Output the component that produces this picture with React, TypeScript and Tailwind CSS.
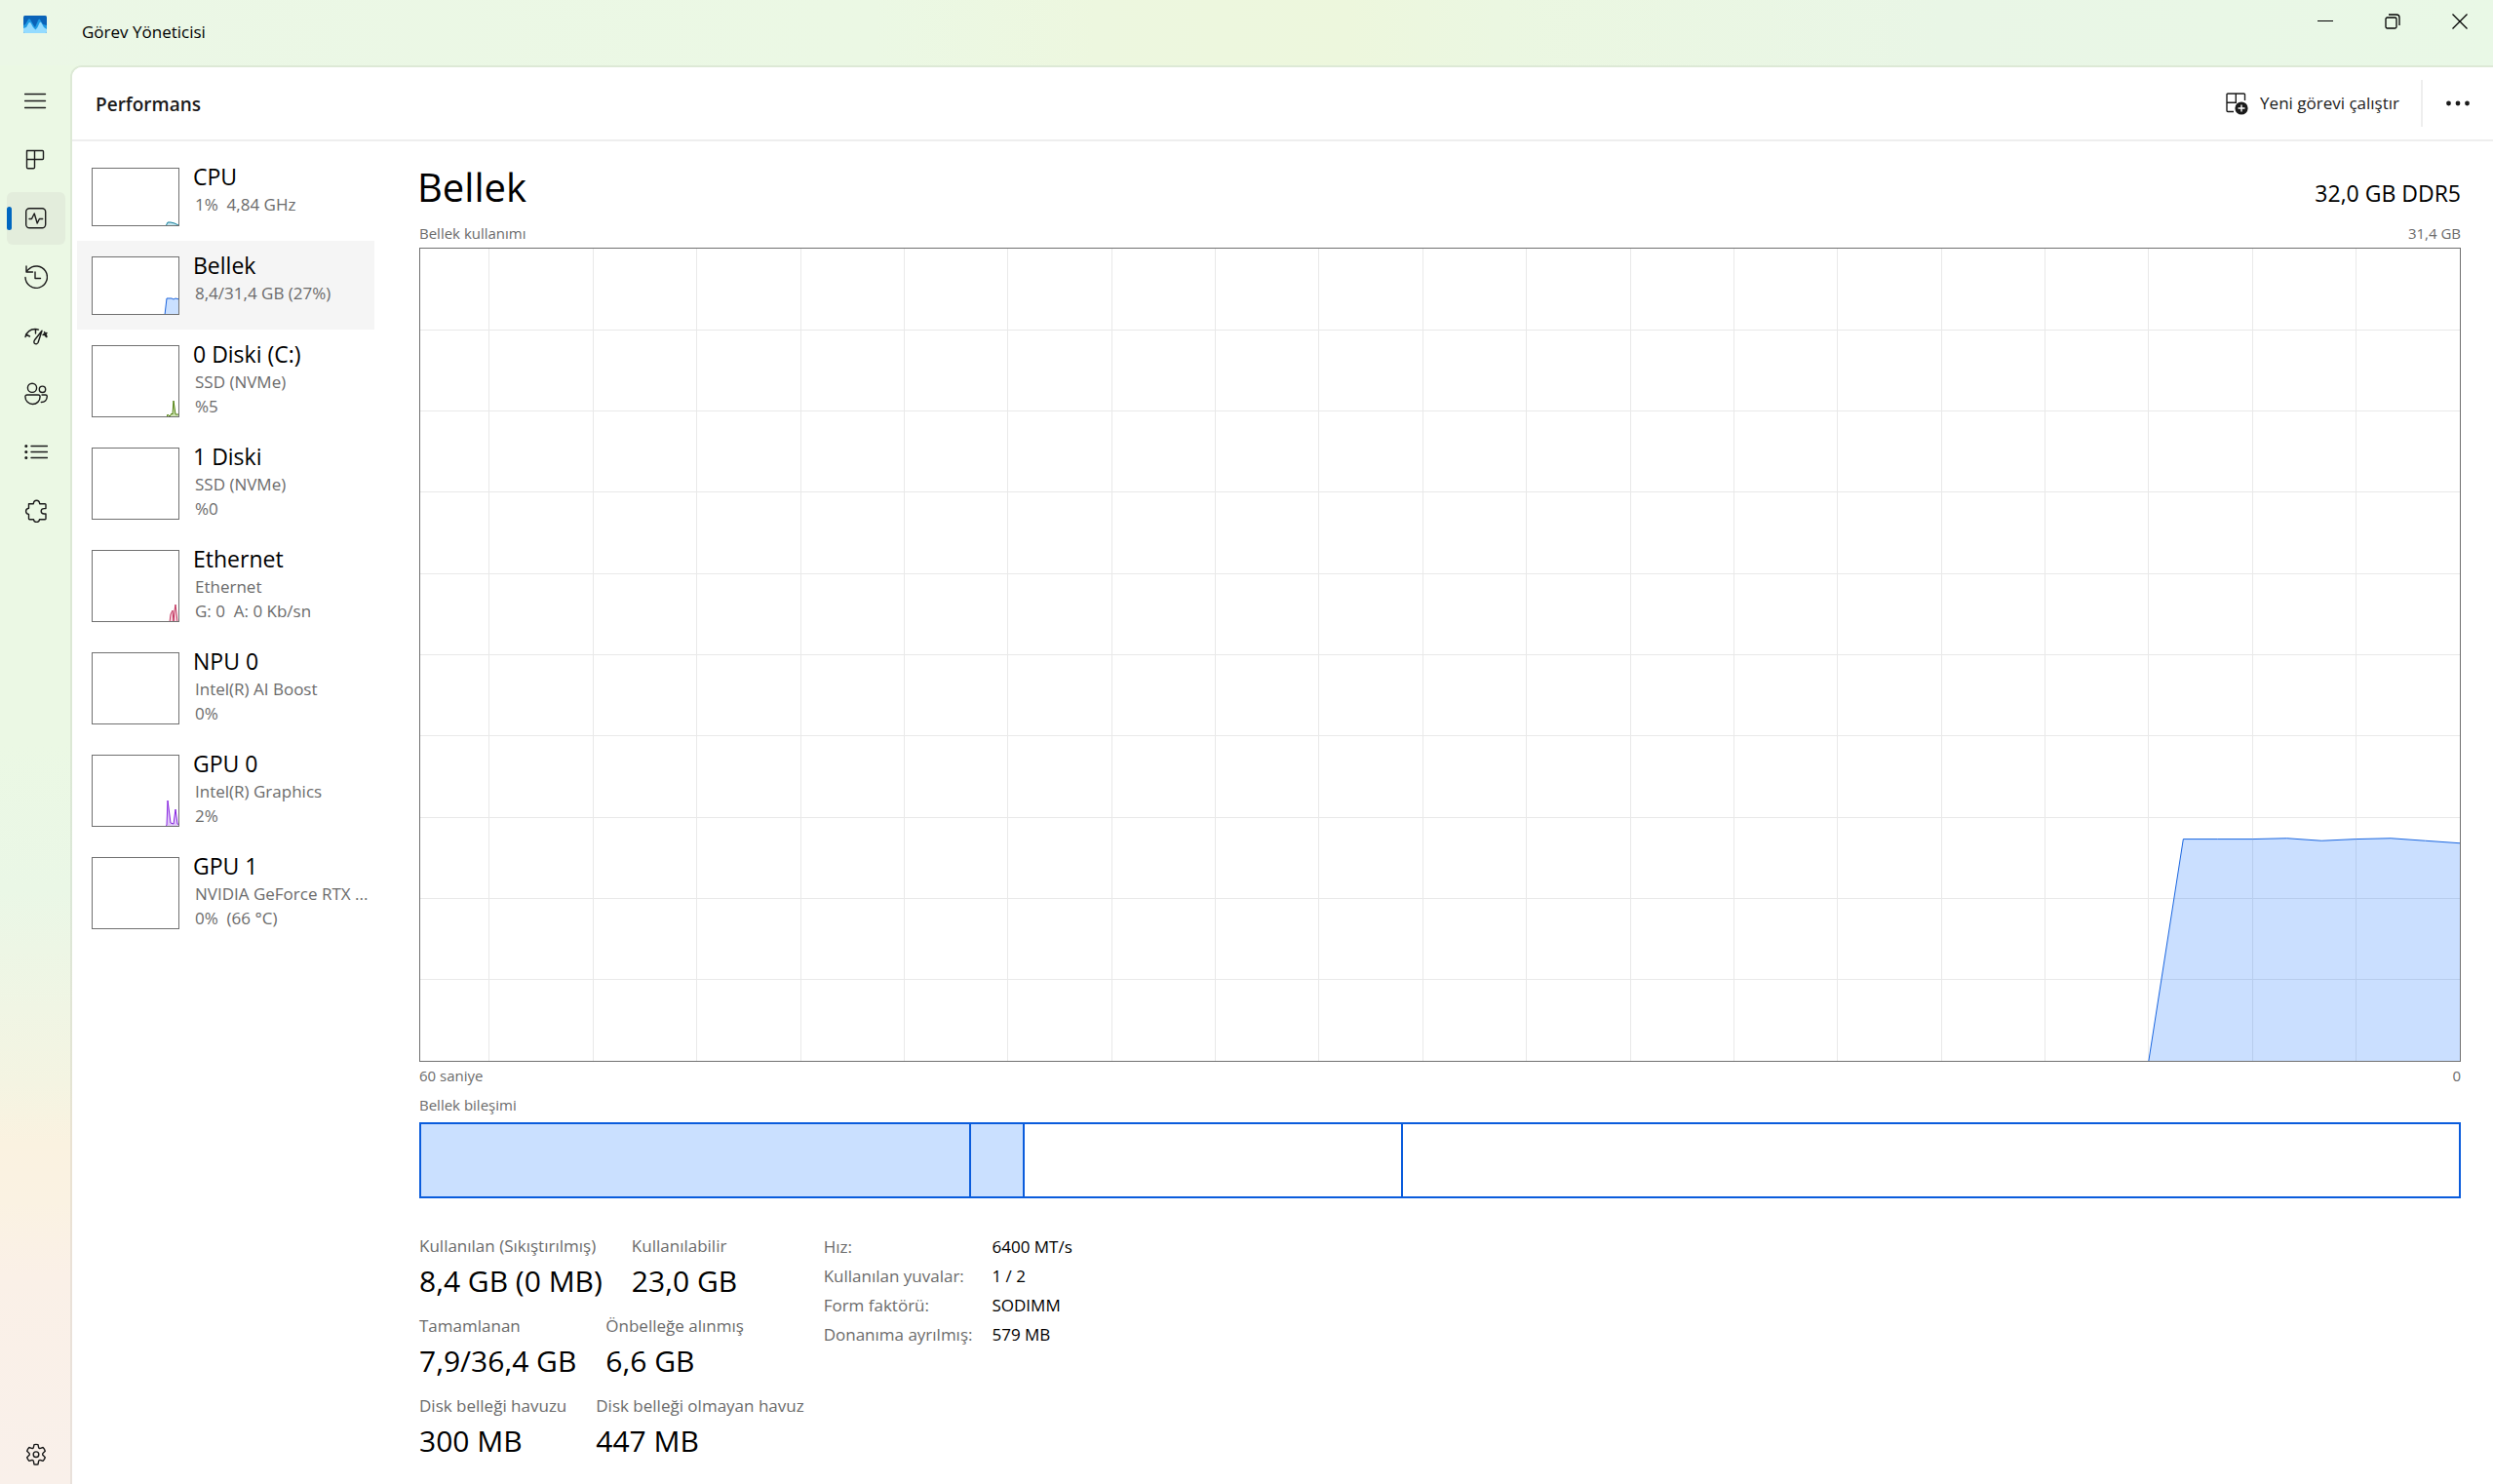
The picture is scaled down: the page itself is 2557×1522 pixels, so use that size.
import type { ReactNode } from "react";
import clsx from "clsx";

interface Device {
  name: string;
  lines: string[];
  color?: string;
  fill?: string;
  points?: string;
  selected?: boolean;
}

const devices: Device[] = [
  { name: "CPU", lines: ["1%  4,84 GHz"], color: "#117d9b", fill: "#c7e6ee", points: "76,60 78,56 81,56 85,57 89,59 89,60" },
  { name: "Bellek", lines: ["8,4/31,4 GB (27%)"], color: "#1a62dc", fill: "#cae0ff", points: "75,60 77,43 82,43 84,44 86,43 90,44 90,60", selected: true },
  { name: "0 Diski (C:)", lines: ["SSD (NVMe)", "%5"], color: "#4f7f0c", fill: "#cfe3b4", points: "77,74 78,71 80,73 82,70 83,71 84,57 86,71 88,71 90,71 90,74" },
  { name: "1 Diski", lines: ["SSD (NVMe)", "%0"], color: "#4f7f0c", fill: "#cfe3b4", points: "77,74 78,73 79,74" },
  { name: "Ethernet", lines: ["Ethernet", "G: 0  A: 0 Kb/sn"], color: "#c2355f", fill: "#f5d3dd", points: "80,74 81,66 83,62 84,74 85,62 86,56 88,74" },
  { name: "NPU 0", lines: ["Intel(R) AI Boost", "0%"] },
  { name: "GPU 0", lines: ["Intel(R) Graphics", "2%"], color: "#8624e0", fill: "#e0c8f8", points: "76,74 77,72 78,47 81,70 84,71 86,56 88,71 90,72 90,74" },
  { name: "GPU 1", lines: ["NVIDIA GeForce RTX ...", "0%  (66 °C)"] },
];

const usage = [0, 27.3, 27.3, 27.3, 27.4, 27.1, 27.3, 27.4, 27.1, 26.8];
const seconds = 59;

const composition = [
  { id: "in-use", percent: 27, filled: true },
  { id: "modified", percent: 2.6, filled: true },
  { id: "standby", percent: 18.6, filled: false },
];

const stats = [
  [
    { label: "Kullanılan (Sıkıştırılmış)", value: "8,4 GB (0 MB)" },
    { label: "Kullanılabilir", value: "23,0 GB" },
  ],
  [
    { label: "Tamamlanan", value: "7,9/36,4 GB" },
    { label: "Önbelleğe alınmış", value: "6,6 GB" },
  ],
  [
    { label: "Disk belleği havuzu", value: "300 MB" },
    { label: "Disk belleği olmayan havuz", value: "447 MB" },
  ],
];

const hardware = [
  { label: "Hız:", value: "6400 MT/s" },
  { label: "Kullanılan yuvalar:", value: "1 / 2" },
  { label: "Form faktörü:", value: "SODIMM" },
  { label: "Donanıma ayrılmış:", value: "579 MB" },
];

function Icon({ children }: { children: ReactNode }) {
  return (
    <svg viewBox="0 0 24 24" className="w-6 h-6" fill="none" stroke="#1b1b1b" strokeWidth="1.4" strokeLinecap="round" strokeLinejoin="round">
      {children}
    </svg>
  );
}

const railItems = [
  { label: "Gezinmeyi aç", icon: <path d="M.5 4.500h21M.5 11.500h21M.5 18.500h21" /> },
  { label: "İşlemler", icon: <path d="M2.500 2.500h16a1 1 0 0 1 1 1v7a1 1 0 0 1-1 1h-8v8a1.200 1.200 0 0 1-1.200 1.200H3.700a1.200 1.200 0 0 1-1.200-1.200v-16a1 1 0 0 1 1-1zM2.500 11.500h8M10.500 2.500v9" /> },
  {
    label: "Performans",
    active: true,
    icon: (
      <>
        <rect x="1.700" y="1.700" width="20" height="20" rx="3.500" />
        <path d="M5 12.500h2.500l2.700-5.500 3 10 2.200-4.500h3.300" />
      </>
    ),
  },
  { label: "Uygulama geçmişi", icon: <path d="M1 12.500a11.200 11.200 0 1 0 3-8L2 6.500M2 1v6h6.500M11 7v6.500h5.500" /> },
  {
    label: "Başlangıç uygulamaları",
    icon: (
      <>
        <path d="M1 13.500C2.500 8.500 6.500 5.500 11 5.500c1.500 0 2.500.2 3.500.6M1.500 11l4 2M11.500 6v4M19 11.500l4-2M20.500 8.500c1 1.300 2 3 2.500 5M20 10.500l2.500 3" />
        <path d="M18 7.200l-7.500 9.600c-1 1.500-.8 3 .3 3.700s2.600.2 3.300-1.200L18 7.200z" />
      </>
    ),
  },
  {
    label: "Kullanıcılar",
    icon: (
      <>
        <circle cx="8" cy="5.800" r="4.600" />
        <circle cx="18.500" cy="7.300" r="3.200" />
        <path d="M2.800 13h11.500a1.800 1.800 0 0 1 1.800 1.800c0 4.600-3.500 7.700-7.600 7.700S.9 19.300.9 14.800A1.800 1.800 0 0 1 2.800 13zM18 13h3.700a1.600 1.600 0 0 1 1.600 1.600c0 3.500-2.500 6-6 5.900" />
      </>
    ),
  },
  {
    label: "Ayrıntılar",
    icon: (
      <>
        <path d="M7 5.500h16.500M7 11.500h16.500M7 17.500h16.500" />
        <g fill="#1b1b1b" stroke="none">
          <circle cx="1.800" cy="5.500" r="1.500" />
          <circle cx="1.800" cy="11.500" r="1.500" />
          <circle cx="1.800" cy="17.500" r="1.500" />
        </g>
      </>
    ),
  },
  {
    label: "Hizmetler",
    icon: (
      <path d="M4.500 4.800h4.800c.2-2 1.400-3.500 3.200-3.500s3 1.500 3.200 3.500h5.500a.8.800 0 0 1 .8.800v4h-1.800c-1.900 0-3 1.200-3 2.700s1.100 2.700 3 2.700H22v5a.8.800 0 0 1-.8.800h-5.700c-.2 1.600-1.400 2.700-3 2.700s-2.800-1.100-3-2.700H5.300a.8.800 0 0 1-.8-.8v-4.600c-1.700-.2-2.900-1.500-2.900-3.100s1.200-2.900 2.900-3.100z" />
    ),
  },
];

function Rail() {
  return (
    <nav className="flex w-[72px] shrink-0 flex-col gap-[6px] pt-[10px] pr-[5px] pb-[3px] pl-[7px]">
      {railItems.map((item) => (
        <button
          key={item.label}
          aria-label={item.label}
          className={clsx("relative flex h-[54px] items-center justify-center rounded-md", item.active && "bg-[#e3eddc]")}
        >
          {item.active && <span className="absolute left-0 h-6 w-[5px] rounded-full bg-[#0067c0]" />}
          <Icon>{item.icon}</Icon>
        </button>
      ))}
      <button aria-label="Ayarlar" className="mt-auto flex h-[54px] items-center justify-center">
        <Icon>
          <path d="M10 1.600a11 11 0 0 1 4 0l.6 2.700a1.400 1.400 0 0 0 1.900 1.100l2.600-.9a10.500 10.500 0 0 1 2.200 3.700l-2.100 2.100a1.500 1.500 0 0 0 0 2.300l2.100 2.100a10.500 10.500 0 0 1-2.200 3.700l-2.600-.9a1.400 1.400 0 0 0-1.900 1.100l-.6 3.200a11 11 0 0 1-4 0l-.6-3.200a1.400 1.400 0 0 0-1.900-1.100l-2.600.9a10.500 10.500 0 0 1-2.200-3.700l2.100-2.100a1.500 1.500 0 0 0 0-2.300L2.700 8.200a10.500 10.500 0 0 1 2.200-3.700l2.600.9a1.400 1.400 0 0 0 1.900-1.100z" />
          <circle cx="12" cy="11.700" r="2.800" />
        </Icon>
      </button>
    </nav>
  );
}

function TitleBar() {
  return (
    <header className="flex h-[67px] shrink-0 items-start">
      <svg viewBox="0 0 24 18" className="mt-4 ml-6 h-[18px] w-6">
        <rect width="24" height="18" rx="1.500" fill="#0a63b8" />
        <path d="M0 10l2-1 3-5q1-1.500 2 0l3.500 6 1.500 2 3-7q1.200-3 2.600 0l2.400 4 4 1v6H0z" fill="#1f9be4" />
        <path d="M0 13l3-1 2.500-4.500q1-1 2 0L10 12l2.500 2.500L14.500 12l2-4.500q1-1.500 2 0L21 12l3 2v2.500a1.500 1.500 0 0 1-1.500 1.500h-21A1.500 1.500 0 0 1 0 16.500z" fill="#94dbff" />
      </svg>
      <span className="ml-9 pt-[21px] text-[17px] leading-6 text-black">Görev Yöneticisi</span>
      <div className="ml-auto flex">
        <button aria-label="Simge durumuna küçült" className="flex h-[43px] w-[69px] items-center justify-center">
          <svg viewBox="0 0 16 16" className="h-4 w-4" stroke="#000"><path d="M0 7.500h16" /></svg>
        </button>
        <button aria-label="Önceki boyuta getir" className="flex h-[43px] w-[69px] items-center justify-center">
          <svg viewBox="0 0 16 16" className="h-4 w-4" fill="none" stroke="#000" strokeWidth="1.300">
            <rect x="1" y="4" width="11" height="11" rx="1.500" />
            <path d="M4 1h8a3 3 0 0 1 3 3v8" />
          </svg>
        </button>
        <button aria-label="Kapat" className="flex h-[43px] w-[69px] items-center justify-center">
          <svg viewBox="0 0 16 16" className="h-4 w-4" stroke="#000" strokeWidth="1.300"><path d="M.5.500l15 15M15.500.500l-15 15" /></svg>
        </button>
      </div>
    </header>
  );
}

function PageHeader() {
  return (
    <div className="flex h-[76px] shrink-0 items-center border-b-2 border-[#eeeeee] bg-white pl-6">
      <h2 className="pt-[2px] text-[19px] font-semibold text-[#1b1b1b]">Performans</h2>
      <button className="ml-auto flex items-center gap-3 text-[17px] text-[#1b1b1b]">
        <svg viewBox="0 0 24 24" className="h-6 w-6" fill="none" stroke="#1b1b1b" strokeWidth="1.400">
          <path d="M20.500 9V3a1 1 0 0 0-1-1H3a1 1 0 0 0-1 1v16.500a1 1 0 0 0 1 1h6M2 11.300h9.300V2" />
          <circle cx="17" cy="17" r="6.600" fill="#1b1b1b" stroke="none" />
          <path d="M17 13.500v7M13.500 17h7" stroke="#fff" />
        </svg>
        Yeni görevi çalıştır
      </button>
      <div className="ml-[22px] h-12 w-[2px] bg-[#eeeeee]" />
      <button aria-label="Diğer seçenekler" className="flex w-[72px] items-center justify-center">
        <svg viewBox="0 0 24 24" className="h-6 w-6" fill="#1b1b1b">
          <circle cx="2.500" cy="12" r="2.400" />
          <circle cx="12" cy="12" r="2.400" />
          <circle cx="21.500" cy="12" r="2.400" />
        </svg>
      </button>
    </div>
  );
}

function DeviceItem({ device }: { device: Device }) {
  const tall = device.lines.length > 1;

  return (
    <button className={clsx("flex w-full pl-[15px] text-left", device.selected && "bg-[#f5f5f5]")}>
      <div className="shrink-0 pt-4 pb-[15px]">
        <div className={clsx("w-[90px] border border-[#707070] bg-white", tall ? "h-[74px]" : "h-[60px]")}>
          {device.points && (
            <svg viewBox={tall ? "1 1 88 72" : "1 1 88 58"} className="h-full w-full">
              <polygon points={device.points} fill={device.fill} stroke={device.color} />
            </svg>
          )}
        </div>
      </div>
      <div className="min-w-0 flex-1 pt-[10px] pl-[14px]">
        <div className="text-[23px] leading-[31px] text-black">{device.name}</div>
        {device.lines.map((line) => (
          <div key={line} className="whitespace-pre pl-[2px] text-[17px] leading-[25px] text-[#6b6b6b]">
            {line}
          </div>
        ))}
      </div>
    </button>
  );
}

function UsageChart() {
  const start = seconds - usage.length + 1;
  const line = usage.map((value, i) => `${start + i},${100 - value}`).join(" ");
  const columns = Array.from({ length: 19 }, (_, i) => 100 - ((i + 1) * 300) / seconds);
  const rows = Array.from({ length: 9 }, (_, i) => (i + 1) * 10);

  return (
    <div className="mt-[3px] min-h-0 flex-1 border border-[#707070]">
      <svg className="block h-full w-full">
        <g stroke="#e9e9e9" shapeRendering="crispEdges">
          {columns.map((x) => (
            <line key={x} x1={`${x}%`} x2={`${x}%`} y1="0" y2="100%" />
          ))}
          {rows.map((y) => (
            <line key={y} x1="0" x2="100%" y1={`${y}%`} y2={`${y}%`} />
          ))}
        </g>
        <svg viewBox={`0 0 ${seconds} 100`} preserveAspectRatio="none" width="100%" height="100%">
          <polygon points={`${line} ${seconds},100`} fill="#0a6cff" fillOpacity="0.215" />
          <polyline points={line} fill="none" stroke="#1a66e0" vectorEffect="non-scaling-stroke" />
        </svg>
      </svg>
    </div>
  );
}

function MemoryDetails() {
  return (
    <section className="flex min-w-0 flex-1 flex-col pt-[22px] pr-[33px] pb-6 pl-[46px]">
      <div className="flex items-baseline justify-between text-black">
        <h1 className="-ml-[2px] text-[40px] leading-[50px]">Bellek</h1>
        <span className="text-[23px]">32,0 GB DDR5</span>
      </div>
      <div className="mt-[10px] flex justify-between text-[15px] leading-6 text-[#6b6b6b]">
        <span>Bellek kullanımı</span>
        <span>31,4 GB</span>
      </div>
      <UsageChart />
      <div className="mt-[2px] flex justify-between text-[15px] leading-6 text-[#6b6b6b]">
        <span>60 saniye</span>
        <span>0</span>
      </div>
      <div className="mt-[6px] text-[15px] leading-6 text-[#6b6b6b]">Bellek bileşimi</div>
      <div className="mt-[6px] flex h-[78px] shrink-0 border-2 border-[#0a5cdc]">
        {composition.map((part) => (
          <div
            key={part.id}
            className={clsx("border-r-2 border-[#0a5cdc]", part.filled && "bg-[#cae0ff]")}
            style={{ width: `${part.percent}%` }}
          />
        ))}
      </div>
      <div className="mt-[35px] flex gap-5">
        <div className="flex flex-col gap-3">
          {stats.map((row) => (
            <dl key={row[0].label} className="flex gap-[30px]">
              {row.map((stat) => (
                <div key={stat.label}>
                  <dt className="text-[17px] leading-7 text-[#6b6b6b]">{stat.label}</dt>
                  <dd className="pt-[2px] text-[30px] leading-10 text-black">{stat.value}</dd>
                </div>
              ))}
            </dl>
          ))}
        </div>
        <table className="self-start text-left text-[17px] leading-[30px]">
          <tbody>
            {hardware.map((row) => (
              <tr key={row.label}>
                <th scope="row" className="p-0 pr-5 font-normal text-[#6b6b6b]">{row.label}</th>
                <td className="p-0 text-black">{row.value}</td>
              </tr>
            ))}
          </tbody>
        </table>
      </div>
    </section>
  );
}

export default function App() {
  return (
    <div className="flex h-screen flex-col overflow-hidden bg-[linear-gradient(to_bottom,#ebf8e4_0%,#ebf8e4_50%,#eaf7e6_60%,#f0f5e4_68%,#f4f4e2_73%,#faf2e0_77%,#faf2e2_81%,#faf0e7_86%,#f9f0ea_100%)] font-['Open_Sans','Noto_Sans',sans-serif]">
      <div className="bg-[linear-gradient(to_right,#ebf7e6_0%,#ebf8e4_35%,#edf7df_44%,#edf7dd_54%,#ebf7e1_60%,#e9f6e6_78%,#e9f8e6_100%)]">
        <TitleBar />
      </div>
      <div className="flex min-h-0 flex-1">
        <Rail />
        <main className="flex min-w-0 flex-1 flex-col rounded-tl-xl border-t-2 border-l-2 border-black/6">
          <div className="flex min-h-0 flex-1 flex-col overflow-hidden rounded-tl-[10px] bg-white">
            <PageHeader />
            <div className="flex min-h-0 flex-1">
              <aside className="w-[310px] shrink-0 pt-[11px] pl-[5px]">
                {devices.map((device) => (
                  <DeviceItem key={device.name} device={device} />
                ))}
              </aside>
              <MemoryDetails />
            </div>
          </div>
        </main>
      </div>
    </div>
  );
}
